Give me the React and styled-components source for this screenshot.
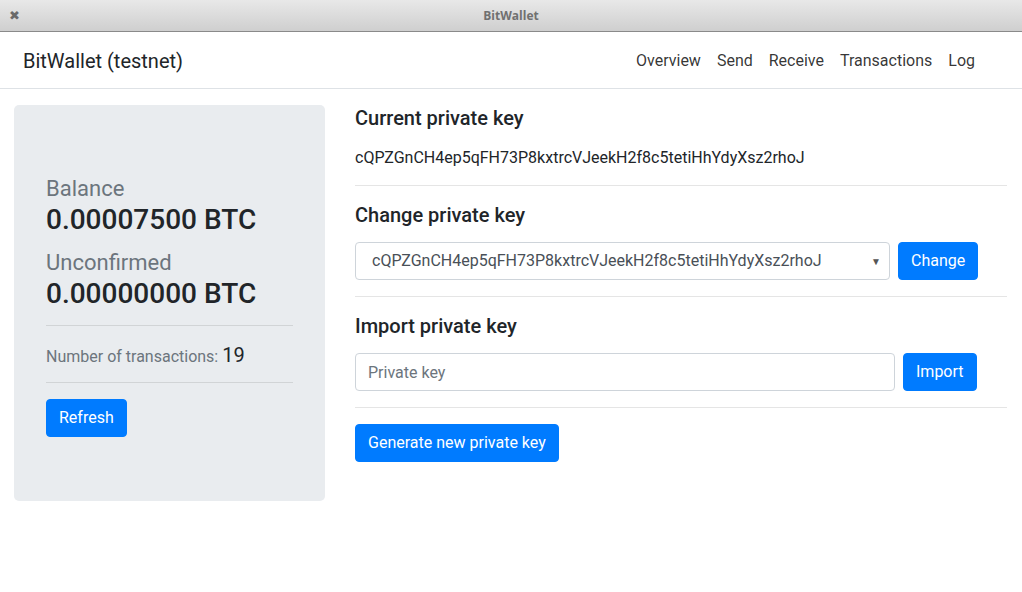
import React from "react";
import styled, { createGlobalStyle } from "styled-components";

const Global = createGlobalStyle`
  html, body { margin: 0; padding: 0; background: #fff; }
  body { font-family: Roboto, "Liberation Sans", sans-serif; color: #212529; font-size: 16px; line-height: 1.5; }
  * { box-sizing: border-box; }
`;

const Window = styled.div`
  width: 1022px;
  height: 592px;
  display: flex;
  flex-direction: column;
  overflow: hidden;
`;

const TitleBar = styled.div`
  height: 32px;
  flex: none;
  display: flex;
  align-items: center;
  position: relative;
  background: linear-gradient(#e8e8e8, #cfcfcf);
  border-bottom: 1px solid #8a8a8a;
`;

const CloseGlyph = styled.span`
  position: absolute;
  left: 9px;
  top: 6px;
  font-family: "DejaVu Sans", sans-serif;
  font-weight: bold;
  font-size: 13px;
  color: #6a6a6a;
`;

const TitleText = styled.div`
  flex: 1;
  text-align: center;
  font-family: "Open Sans", "DejaVu Sans", sans-serif;
  font-weight: 700;
  font-size: 12px;
  color: #707070;
`;

const Navbar = styled.nav`
  flex: none;
  height: 57px;
  display: flex;
  align-items: center;
  justify-content: space-between;
  padding: 2px 39px 0 23px;
  border-bottom: 1px solid #dee2e6;
`;

const Brand = styled.div`
  font-size: 20px;
  color: #212529;
  line-height: 1.5;
`;

const NavList = styled.div`
  display: flex;
`;

const NavLink = styled.a`
  padding: 8px 8px;
  color: rgba(0, 0, 0, 0.8);
  font-size: 16px;
  text-decoration: none;
`;

const Row = styled.div`
  display: grid;
  grid-template-columns: 340px 1fr;
  padding-top: 16px;
`;

const Col = styled.div`
  padding: 0 15px 0 ${(p) => (p.$left ? "14px" : "15px")};
`;

const Jumbo = styled.div`
  background: #e9ecef;
  border-radius: 5px;
  padding: 71px 32px 64px;
`;

const StatLabel = styled.div`
  font-size: 22px;
  color: #6c757d;
  line-height: 1.2;
  margin-bottom: 1px;
`;

const StatValue = styled.div`
  font-size: 28px;
  font-weight: 500;
  line-height: 1.2;
  color: #212529;
  margin-bottom: ${(p) => p.$mb || "13px"};
`;

const Divider = styled.hr`
  border: 0;
  border-top: 1px solid rgba(0, 0, 0, 0.1);
  margin: ${(p) => p.$m || "16px 0"};
`;

const TxLine = styled.div`
  color: #6c757d;
  font-size: 16px;
  line-height: 1.5;
`;

const TxCount = styled.span`
  color: #212529;
  font-size: 20px;
  font-weight: 400;
`;

const Button = styled.button`
  font-family: inherit;
  font-size: 16px;
  line-height: 1.5;
  padding: 6px 12px;
  height: 38px;
  color: #fff;
  background: #007bff;
  border: 1px solid #007bff;
  border-radius: 4px;
  flex: none;
`;

const SectionTitle = styled.h5`
  margin: ${(p) => (p.$first ? "1px" : "0")} 0 8px;
  font-size: 20px;
  font-weight: 500;
  line-height: 1.2;
`;

const KeyText = styled.p`
  margin: 16px 0 0;
  font-size: 16px;
`;

const FormRow = styled.div`
  display: flex;
  align-items: center;
  gap: 8px;
  margin-top: 15px;
`;

const Select = styled.div`
  width: ${(p) => p.$w}px;
  height: 38px;
  border: 1px solid #ced4da;
  border-radius: 4px;
  display: flex;
  align-items: center;
  justify-content: space-between;
  padding: 0 8px 0 16px;
  color: #495057;
  font-size: 16px;
  background: #fff;
`;

const Caret = styled.span`
  font-size: 10px;
  color: #555;
`;

const Input = styled.input`
  width: ${(p) => p.$w}px;
  height: 38px;
  border: 1px solid #ced4da;
  border-radius: 4px;
  padding: 6px 12px;
  font-family: inherit;
  font-size: 16px;
  color: #495057;
  &::placeholder { color: #6c757d; }
`;

const keyStr = "cQPZGnCH4ep5qFH73P8kxtrcVJeekH2f8c5tetiHhYdyXsz2rhoJ";

export default function App() {
  return (
    <Window>
      <Global />
      <TitleBar>
        <CloseGlyph>✖</CloseGlyph>
        <TitleText>BitWallet</TitleText>
      </TitleBar>
      <Navbar>
        <Brand>BitWallet (testnet)</Brand>
        <NavList>
          {["Overview", "Send", "Receive", "Transactions", "Log"].map((n) => (
            <NavLink key={n}>{n}</NavLink>
          ))}
        </NavList>
      </Navbar>
      <Row>
        <Col $left>
          <Jumbo>
            <StatLabel>Balance</StatLabel>
            <StatValue>0.00007500 BTC</StatValue>
            <StatLabel>Unconfirmed</StatLabel>
            <StatValue $mb="0">0.00000000 BTC</StatValue>
            <Divider $m="14px 0 14px" />
            <TxLine>
              Number of transactions: <TxCount>19</TxCount>
            </TxLine>
            <Divider $m="12px 0 16px" />
            <Button>Refresh</Button>
          </Jumbo>
        </Col>
        <Col>
          <SectionTitle $first>Current private key</SectionTitle>
          <KeyText>{keyStr}</KeyText>
          <Divider $m="15px 0 17px" />
          <SectionTitle>Change private key</SectionTitle>
          <FormRow>
            <Select $w={535}>
              <span>{keyStr}</span>
              <Caret>▼</Caret>
            </Select>
            <Button>Change</Button>
          </FormRow>
          <Divider $m="16px 0 17px" />
          <SectionTitle>Import private key</SectionTitle>
          <FormRow>
            <Input $w={540} placeholder="Private key" />
            <Button>Import</Button>
          </FormRow>
          <Divider $m="16px 0 16px" />
          <Button>Generate new private key</Button>
        </Col>
      </Row>
    </Window>
  );
}
